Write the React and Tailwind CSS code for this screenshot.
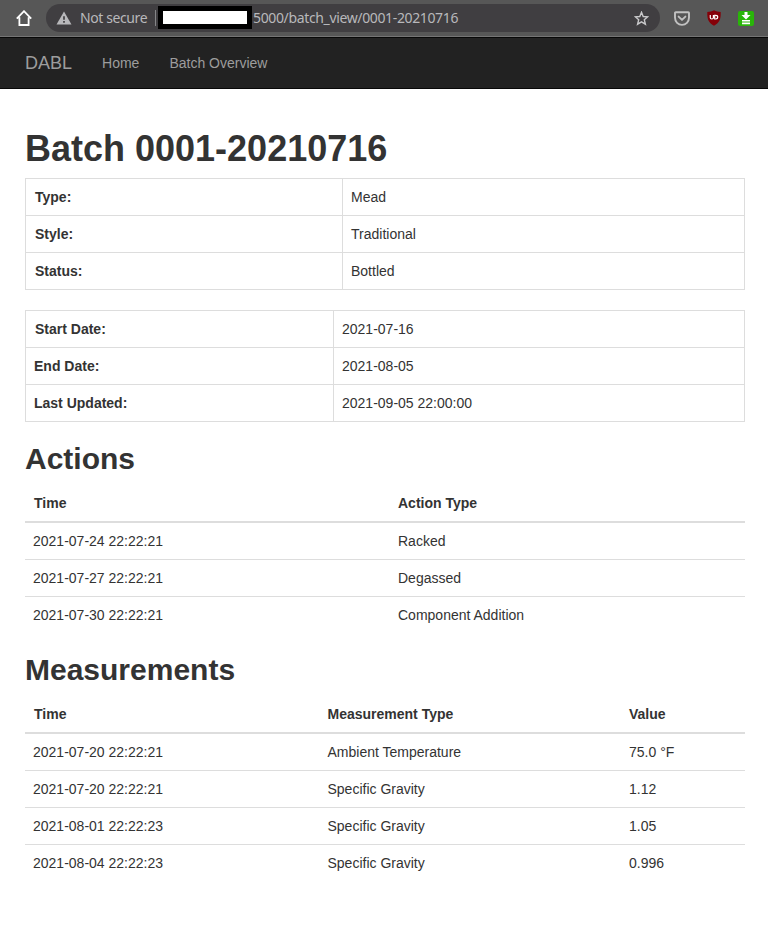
import React from "react";

function BrowserBar() {
  return (
    <div className="flex h-[37px] items-start border-b border-[#757575] bg-[#575757] font-['Noto_Sans','Open_Sans',sans-serif] text-[14px]">
      <svg className="ml-4 mt-2.5 shrink-0" width="16" height="17" viewBox="0 0 16 17" fill="none" stroke="#fff" strokeWidth="1.8">
        <path d="M0.8 8.6 L8 1.2 L15.2 8.6 M3.4 7.2 V15 H12.6 V7.2" />
      </svg>
      <div className="ml-3.5 mt-1 flex h-7 w-[614px] items-center rounded-full bg-[#403e41] text-[#b8b8bb]">
        <svg className="ml-2.5 shrink-0" width="16" height="14" viewBox="0 0 16 14">
          <path d="M8 0.5 L15.5 13.5 H0.5 Z" fill="#b8b8bb" />
          <path d="M8 5.2 V8.8 M8 10 V11.7" stroke="#403e41" strokeWidth="1.7" />
        </svg>
        <span className="ml-2 w-[75px] whitespace-nowrap tracking-[-0.4px]">Not secure</span>
        <span className="h-4 w-px bg-[#858587]" />
        <span className="mb-px ml-0.5 h-[23px] w-[94px] border-[5px] border-black bg-white" />
        <span className="ml-px whitespace-nowrap tracking-[-0.36px]">5000/batch_view/0001-20210716</span>
        <svg className="ml-auto mr-[11px] shrink-0" width="15" height="15" viewBox="0 0 15 15" fill="none" stroke="#c8c8ca" strokeWidth="1.4">
          <path d="M7.5 1.3 L9.2 5.5 L13.7 5.8 L10.3 8.7 L11.4 13.2 L7.5 10.8 L3.6 13.2 L4.7 8.7 L1.3 5.8 L5.8 5.5 Z" />
        </svg>
      </div>
      <svg className="ml-3.5 mt-[11px] shrink-0" width="16" height="15" viewBox="0 0 16 15" fill="none" stroke="#c2c2c2" strokeWidth="1.9" strokeLinejoin="round">
        <path d="M1.8 1.2 H14.2 Q15 1.2 15 2 V6.5 C15 11 11.8 13.9 8 13.9 C4.2 13.9 1 11 1 6.5 V2 Q1 1.2 1.8 1.2 Z" />
        <path d="M4.6 5.6 L8 8.9 L11.4 5.6" strokeLinecap="round" />
      </svg>
      <svg className="ml-[17px] mt-2.5 shrink-0" width="14" height="16" viewBox="0 0 14 16" fill="none">
        <path d="M7 0.3 C9 1.6 11.3 2 13.7 2 C13.9 8.8 12.8 12.7 7 15.7 C1.2 12.7 0.1 8.8 0.3 2 C2.7 2 5 1.6 7 0.3 Z" fill="#850008" />
        <path d="M3.3 5 V7.8 Q3.3 9 4.8 9 Q6.4 9 6.4 7.8 V5 M7.7 5.4 H8.7 Q10.7 5.4 10.7 7.1 Q10.7 9 8.7 9 H7.7 Z" stroke="#fff" strokeWidth="1.2" />
      </svg>
      <svg className="ml-[17px] mt-[11px] shrink-0" width="16" height="15" viewBox="0 0 16 15">
        <rect width="16" height="15" rx="2" fill="#29b509" />
        <path d="M6.5 1 H9.5 V4 H12.5 L8 8.5 L3.5 4 H6.5 Z M4 9 H12 V10.6 H4 Z M4 11.6 H12 V13.2 H4 Z" fill="#fff" />
      </svg>
    </div>
  );
}

function Details({ rows, labelClass, indents }) {
  return (
    <dl className="mb-5 border border-b-0 border-[#ddd]">
      {rows.map(([label, value], i) => (
        <div key={label} className="flex h-[37px] border-b border-[#ddd]">
          <dt className={`border-r border-[#ddd] pt-2 font-bold ${labelClass} ${indents[i]}`}>{label}</dt>
          <dd className="pl-2 pt-2">{value}</dd>
        </div>
      ))}
    </dl>
  );
}

function DataTable({ heads, rows, widths }) {
  return (
    <div className="w-[720px]">
      <div className="flex h-[38px] border-b-2 border-[#ddd]">
        {heads.map((head, i) => (
          <div key={head} className={`pt-2 font-bold ${i === 0 ? "pl-[9px]" : "pl-2"} ${widths[i]}`}>{head}</div>
        ))}
      </div>
      {rows.map((row, r) => (
        <div key={r} className={`flex ${r ? "h-[37px] border-t border-[#ddd]" : "h-9"}`}>
          {row.map((cell, i) => (
            <div key={i} className={`pl-2 pt-2 ${widths[i]}`}>{cell}</div>
          ))}
        </div>
      ))}
    </div>
  );
}

export default function App() {
  return (
    <div className="h-[928px] overflow-hidden bg-white font-['Liberation_Sans',Arial,sans-serif] text-[14px] leading-5 text-[#333]">
      <BrowserBar />
      <nav className="flex h-[52px] items-center border-y border-[#080808] bg-[#222] pl-[25px] text-[#9d9d9d]">
        <a className="text-[18px]">DABL</a>
        <a className="ml-[30px]">Home</a>
        <a className="ml-[30px]">Batch Overview</a>
      </nav>
      <main className="w-[745px] pl-[25px] pt-10">
        <h1 className="mb-[9px] text-[36px] font-bold leading-10">Batch 0001-20210716</h1>
        <Details
          labelClass="w-[317px]"
          indents={["pl-[9px]", "pl-[9px]", "pl-[9px]"]}
          rows={[["Type:", "Mead"], ["Style:", "Traditional"], ["Status:", "Bottled"]]}
        />
        <Details
          labelClass="w-[308px]"
          indents={["pl-[9px]", "pl-2", "pl-2"]}
          rows={[["Start Date:", "2021-07-16"], ["End Date:", "2021-08-05"], ["Last Updated:", "2021-09-05 22:00:00"]]}
        />
        <h2 className="mb-[9px] text-[30px] font-bold leading-[34px]">Actions</h2>
        <DataTable
          heads={["Time", "Action Type"]}
          widths={["w-[365px]", "w-[355px]"]}
          rows={[
            ["2021-07-24 22:22:21", "Racked"],
            ["2021-07-27 22:22:21", "Degassed"],
            ["2021-07-30 22:22:21", "Component Addition"],
          ]}
        />
        <h2 className="mb-[9px] mt-5 text-[30px] font-bold leading-[34px]">Measurements</h2>
        <DataTable
          heads={["Time", "Measurement Type", "Value"]}
          widths={["w-[294.5px]", "w-[301.5px]", "w-[124px]"]}
          rows={[
            ["2021-07-20 22:22:21", "Ambient Temperature", "75.0 °F"],
            ["2021-07-20 22:22:21", "Specific Gravity", "1.12"],
            ["2021-08-01 22:22:23", "Specific Gravity", "1.05"],
            ["2021-08-04 22:22:23", "Specific Gravity", "0.996"],
          ]}
        />
      </main>
    </div>
  );
}
